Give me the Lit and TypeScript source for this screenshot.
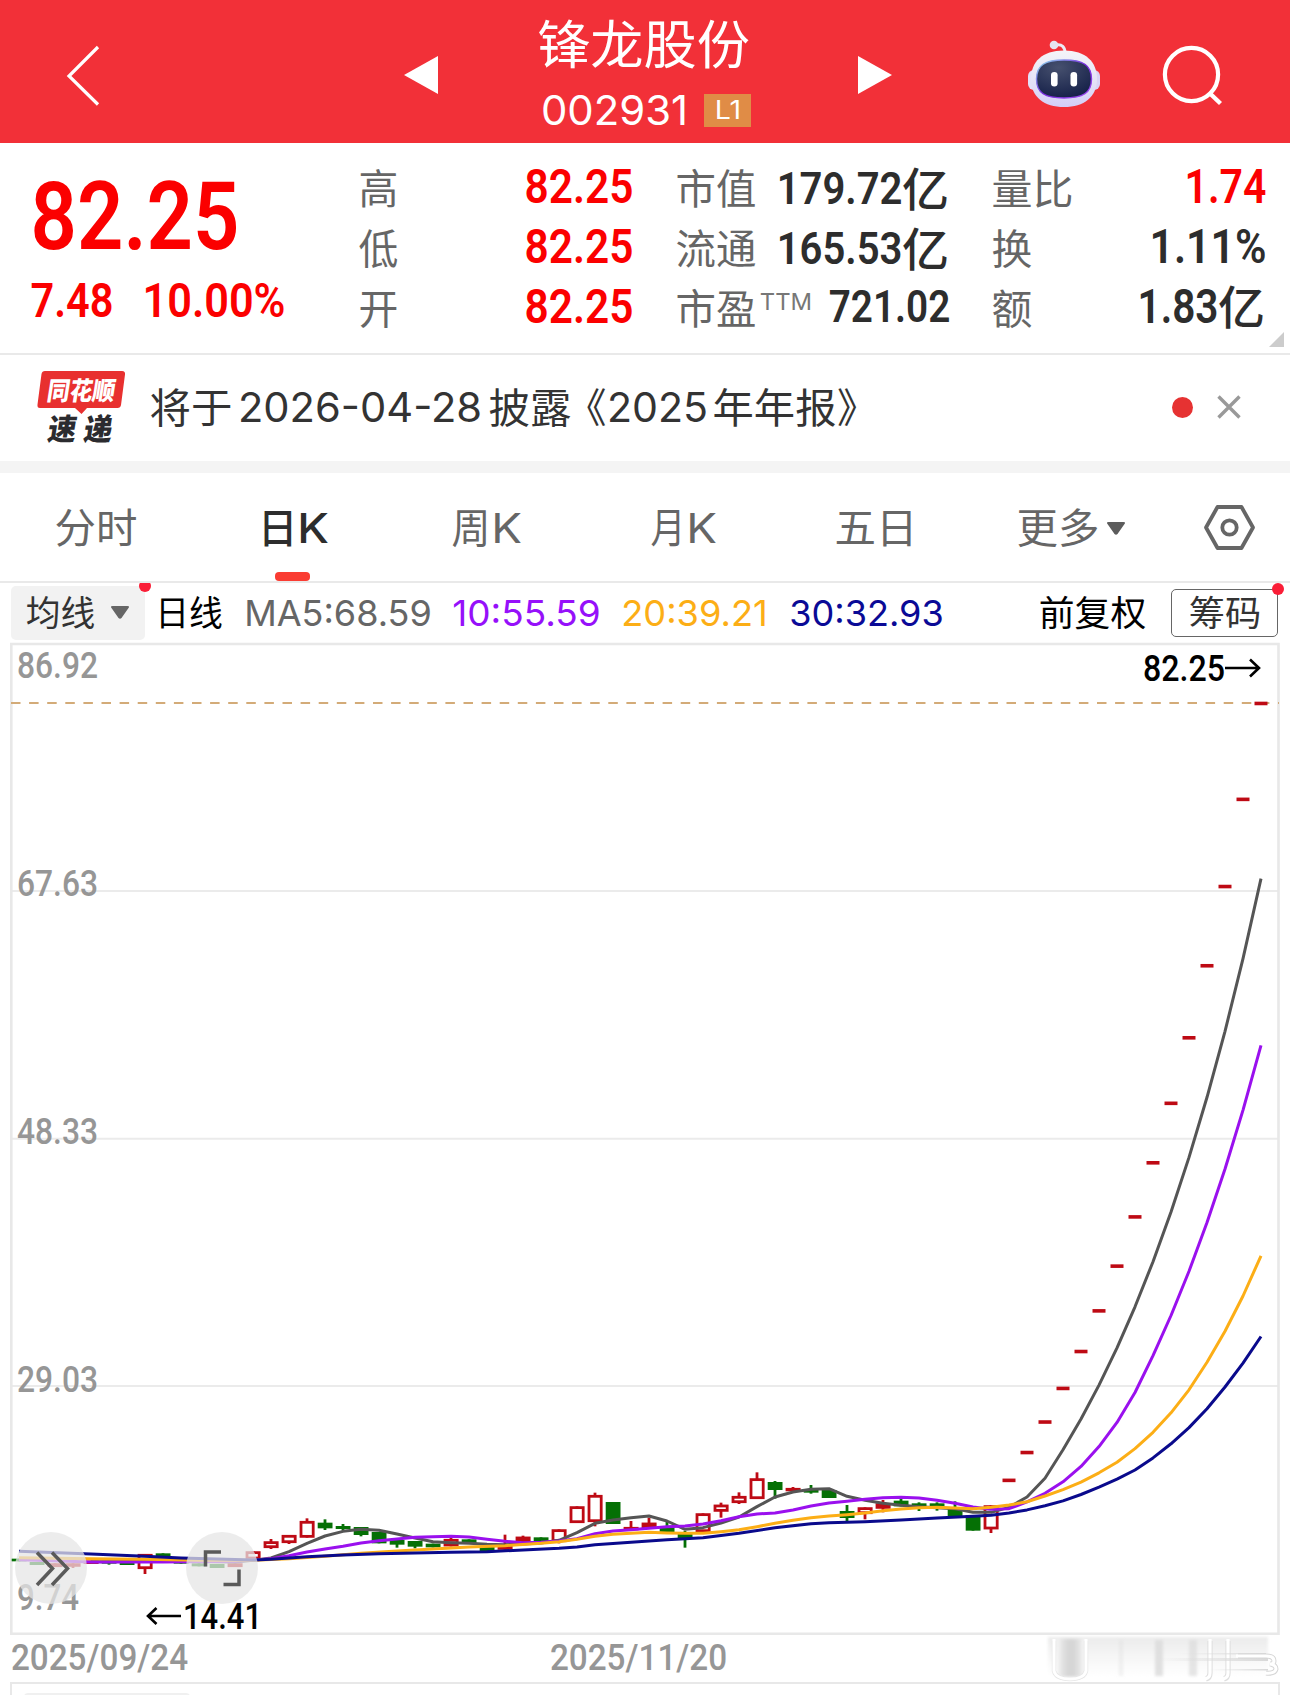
import { LitElement, html, svg, css } from "lit";
import { customElement, property } from "lit/decorators.js";

type Face = "din" | "ui" | "cjk";

/* A run of text set to an exact width. The box is as high as the capitals, so
   rows of mixed scripts line up with align-items: center. */
@customElement("fit-text")
class FitText extends LitElement {
  @property() text = "";
  @property() face: Face = "cjk";
  @property({ type: Number }) width = 40;
  @property({ type: Number }) size = 40;
  @property({ type: Number }) bear = -1;

  static styles = css`
    :host { display: block; flex: none; }
    svg { display: block; overflow: visible; }
    text { fill: currentColor; white-space: pre; }
    .din { font-family: Roboto, "Noto Sans CJK SC", sans-serif; }
    .ui { font-family: Inter, "Noto Sans CJK SC", sans-serif; }
    .cjk { font-family: "Noto Sans CJK SC", sans-serif; }
  `;

  render() {
    const ratio = { din: 0.711, ui: 0.727, cjk: 0.76 }[this.face];
    const side = { din: 0.03, ui: 0.05, cjk: 0.035 }[this.face];
    const b = this.size * (this.bear >= 0 ? this.bear : side);
    const h = this.size * ratio;
    return html`<svg width=${this.width} height=${h}>
      <text class=${this.face} x=${-b} y=${h} font-size=${this.size}
        textLength=${this.width + 2 * b} lengthAdjust="spacingAndGlyphs">${this.text}</text>
    </svg>`;
  }
}

const fit = (text: string, width: number, size: number, face: Face = "cjk", cls = "", bear = -1) =>
  html`<fit-text class=${cls} .text=${text} .width=${width} .size=${size} .face=${face} .bear=${bear}></fit-text>`;

/* Candles: kind, body top, body bottom, high, low, in thirds of a pixel below Y0. */
const Y0 = 1440;
type Candle = [string, number, number, number, number];
const candles: Candle[] = [
  ["g", 356, 364, 356, 364], ["g", 366, 375, 366, 375], ["r", 370, 381, 370, 381], ["r", 370, 380, 370, 384],
  ["r", 362, 370, 362, 370], ["g", 362, 371, 362, 374], ["g", 364, 375, 364, 375], ["r", 342, 387, 342, 402],
  ["g", 340, 349, 340, 349], ["g", 362, 371, 362, 371], ["g", 370, 379, 370, 379], ["g", 372, 384, 372, 384],
  ["r", 370, 381, 370, 381], ["r", 334, 358, 334, 358], ["r", 304, 324, 297, 327], ["r", 285, 309, 285, 312],
  ["r", 243, 293, 235, 293], ["g", 248, 265, 238, 270], ["g", 258, 267, 252, 272], ["g", 261, 285, 261, 289],
  ["g", 276, 310, 276, 310], ["g", 300, 314, 300, 323], ["g", 303, 320, 303, 325], ["g", 311, 322, 311, 322],
  ["r", 297, 319, 293, 319], ["g", 298, 309, 298, 309], ["g", 318, 334, 318, 334], ["r", 317, 329, 284, 329],
  ["r", 290, 306, 287, 306], ["g", 292, 304, 292, 304], ["r", 268, 306, 268, 310], ["r", 199, 249, 199, 249],
  ["r", 165, 246, 158, 259], ["g", 186, 252, 186, 252], ["r", 261, 270, 243, 270], ["r", 248, 264, 233, 264],
  ["g", 262, 280, 245, 280], ["g", 280, 296, 273, 323], ["r", 220, 276, 220, 276], ["r", 194, 215, 188, 233],
  ["r", 168, 189, 157, 192], ["r", 115, 177, 97, 177], ["g", 126, 150, 123, 176], ["r", 144, 153, 141, 153],
  ["g", 147, 158, 135, 161], ["g", 150, 174, 150, 174], ["g", 213, 234, 195, 245], ["r", 202, 222, 202, 238],
  ["r", 190, 206, 180, 217], ["g", 182, 199, 177, 199], ["g", 190, 205, 187, 213], ["g", 190, 205, 187, 212],
  ["g", 205, 228, 184, 228], ["g", 226, 272, 226, 272], ["r", 196, 268, 196, 279],
];
const limitUps = [21.65, 23.82, 26.2, 28.82, 31.7, 34.87, 38.36, 42.2, 46.42, 51.06, 56.17, 61.79, 67.97, 74.77, 82.25];
const priceY = (p: number) => 643.6 + (86.92 - p) * 12.82;
const third = (v: number) => Y0 + v / 3;
const colX = (i: number) => 19 + 18 * i;
const closes = [
  ...candles.map(([k, t, b]) => third(k === "r" ? t : b)),
  ...limitUps.map(priceY),
];

/* Averages for the older candles are stored as [index, level]; recent ones are computed. */
type Pts = [number, number][];
const averages: { n: number; color: string; pts: Pts }[] = [
  { n: 5, color: "#555", pts: [[4, 365], [8, 364], [12, 366], [13, 361], [14, 354], [15, 335], [16, 310], [17, 288], [18, 274], [19, 268], [20, 271], [21, 282], [22, 294], [23, 305], [24, 308], [25, 310], [26, 313], [27, 314], [28, 312], [29, 309], [30, 301], [31, 278], [32, 250], [33, 240], [34, 233], [35, 228], [36, 243], [37, 268], [38, 263], [39, 249], [40, 231], [41, 200], [42, 171], [43, 156], [44, 148], [45, 146], [46, 169], [47, 181], [48, 190], [49, 196], [50, 200], [51, 203], [52, 206], [53, 217], [54, 217], [55, 202]] },
  { n: 10, color: "#9a10ee", pts: [[0, 359], [4, 366], [8, 366], [12, 364], [13, 360], [14, 356], [15, 347], [16, 336], [17, 327], [18, 319], [19, 309], [20, 302], [21, 297], [22, 292], [23, 290], [24, 289], [25, 291], [26, 298], [27, 304], [28, 308], [29, 307], [30, 303], [31, 296], [32, 281], [33, 273], [34, 269], [35, 265], [36, 260], [37, 258], [38, 252], [39, 242], [40, 230], [41, 222], [42, 219], [43, 210], [44, 198], [45, 189], [46, 184], [47, 178], [48, 173], [49, 172], [50, 174], [51, 181], [52, 190], [53, 201], [54, 208], [55, 206]] },
  { n: 20, color: "#fcae16", pts: [[0, 353], [4, 356], [7, 358], [10, 361], [13, 361], [15, 356], [17, 349], [19, 340], [21, 333], [23, 327], [25, 321], [27, 317], [29, 310], [30, 305], [31, 298], [32, 289], [33, 283], [34, 280], [35, 277], [36, 279], [37, 280], [38, 280], [39, 275], [40, 269], [41, 260], [42, 250], [43, 241], [44, 233], [45, 228], [46, 224], [47, 219], [48, 212], [49, 207], [50, 203], [51, 202], [52, 204], [53, 206], [54, 202], [55, 195]] },
  { n: 30, color: "#0a0a8c", pts: [[0, 334], [4, 342], [7, 349], [9, 354], [13, 360], [14, 358], [16, 350], [18, 345], [20, 341], [22, 339], [24, 337], [26, 335], [28, 330], [30, 325], [31, 321], [32, 314], [34, 307], [36, 299], [38, 293], [40, 280], [42, 263], [44, 251], [45, 248], [46, 247], [47, 245], [49, 240], [51, 234], [53, 229], [54, 226], [55, 219]] },
];

@customElement("k-chart")
class KChart extends LitElement {
  static styles = css`
    :host { display: block; }
    svg { display: block; overflow: visible; }
    text { font-family: Roboto, sans-serif; font-weight: 500; }
    .scale { fill: #969696; font-size: 36.5px; font-weight: 550; }
    .mark { fill: #000; font-size: 36px; }
    .frame { fill: none; stroke: #e8e8e8; stroke-width: 2.6; }
    .grid { stroke: #ebebeb; stroke-width: 2; }
    .last { stroke: #d3ab78; stroke-width: 1.8; stroke-dasharray: 9.5 8.6; }
    .r { fill: #fff; stroke: #be0a14; stroke-width: 2.8; }
    .wr { stroke: #be0a14; stroke-width: 2.8; }
    .g { fill: #057005; }
    .wg { stroke: #057005; stroke-width: 2.8; }
    .flat { stroke: #be0a14; stroke-width: 3.6; }
    .avg { fill: none; stroke-width: 3; stroke-linejoin: round; }
    .disc { fill: #e6e6e6; fill-opacity: 0.74; }
    .icon { fill: none; stroke: #5a5a5a; stroke-width: 3.5; }
    .arrow { fill: none; stroke: #000; stroke-width: 2.6; }
  `;

  private candle([k, t, b, hi, lo]: Candle, i: number) {
    const x = colX(i), top = third(t), bot = third(b);
    return svg`
      <line class="w${k}" x1=${x} x2=${x} y1=${third(hi)} y2=${third(lo)} />
      ${k === "r"
        ? svg`<rect class="r" x=${x - 6} y=${top + 1.3} width="12.2" height=${Math.max(0.6, bot - top - 2.6)} />`
        : svg`<rect class="g" x=${x - 7.3} y=${top} width="14.8" height=${bot - top} />`}`;
  }

  private average({ n, color, pts }: { n: number; color: string; pts: Pts }) {
    const p = pts.map(([i, v]) => `${colX(i)},${third(v)}`);
    for (let i = 56; i < closes.length; i++) {
      const mean = closes.slice(i - n + 1, i + 1).reduce((a, c) => a + c, 0) / n;
      p.push(`${colX(i)},${mean.toFixed(1)}`);
    }
    return svg`<polyline class="avg" stroke=${color} points=${p.join(" ")} />`;
  }

  render() {
    return html`<svg width="1290" height="993" viewBox="0 643 1290 993">
      ${[891, 1138.7, 1386].map((y) => svg`<line class="grid" x1="12" x2="1278" y1=${y} y2=${y} />`)}
      <path class="frame" d="M11.3 644H1278.5V1633.7H11.3Z" />
      ${([[86.92, 678], [67.63, 896], [48.33, 1143.5], [29.03, 1392]] as const).map(([v, y]) =>
        svg`<text class="scale" x="17" y=${y} textLength="81" lengthAdjust="spacingAndGlyphs">${v}</text>`)}
      <text class="scale" x="17" y="1609.5" textLength="62" lengthAdjust="spacingAndGlyphs">9.74</text>
      ${candles.map((c, i) => this.candle(c, i))}
      <line class="last" x1="11" x2="1279" y1="703" y2="703" />
      ${limitUps.map((p, i) => svg`<line class="flat" x1=${colX(55 + i) - 6.5} x2=${colX(55 + i) + 6.5} y1=${priceY(p)} y2=${priceY(p)} />`)}
      ${averages.map((a) => this.average(a))}
      <text class="mark" x="1143" y="681" textLength="82" lengthAdjust="spacingAndGlyphs">82.25</text>
      <path class="arrow" d="M1225 668H1259M1250 659.500L1259 668L1250 676.500" />
      <text class="mark" x="183" y="1629" textLength="79" lengthAdjust="spacingAndGlyphs">14.41</text>
      <path class="arrow" d="M181 1616H148M156.500 1608L148 1616L156.500 1624" />
      <circle class="disc" cx="51" cy="1568" r="36" />
      <path class="icon" d="M37 1552.500L52.500 1568.500L37 1585M52 1552.500L67.500 1568.500L52 1585" />
      <circle class="disc" cx="222" cy="1568" r="36" />
      <path class="icon" d="M205.500 1566.500V1552H221M239 1569.500V1584.500H223.500" />
    </svg>`;
  }
}

@customElement("app-root")
class AppRoot extends LitElement {
  static styles = css`
    :host { display: block; width: 1290px; height: 1695px; overflow: hidden; background: #fff; color: #333; }
    * { box-sizing: border-box; }
    svg { display: block; flex: none; overflow: visible; }
    .head { height: 143px; background: #f23038; color: #fff; display: flex; padding: 0 66px; }
    .back { margin: 46px 305px 0 0; }
    .prev { margin: 56px 101px 0 0; }
    .title { width: 212px; padding-top: 24px; }
    .code { display: flex; gap: 18px; margin: 30px 0 0 4px; }
    .code fit-text { margin-top: 1px; }
    .badge { width: 48px; height: 33px; background: #e08c46; display: flex; align-items: center; justify-content: center; }
    .badge fit-text { margin: 0; }
    .next { margin: 56px 0 0 107px; }
    .bot { margin: 40px 0 0 135px; }
    .find { margin: 45px 0 0 61px; }

    .stats { height: 212px; border-bottom: 2px solid #e9e9e9; display: grid; grid-template-columns: 328px 317px 316px 273px; padding: 15px 24px 0 32px; position: relative; }
    .red { color: #fb0000; }
    .num { font-weight: 600; }
    .delta { display: flex; gap: 32px; margin-top: 34.5px; }
    .main { padding-top: 23px; }
    .line { width: 272px; height: 60px; display: flex; align-items: center; color: #666; }
    .line .dark { color: #2d2d2d; font-weight: 600; }
    .line .yi { font-weight: 500; }
    .line .end { margin-left: auto; }
    .line .raise { margin-bottom: 4px; }
    .line .ttm { margin: 0 0 13px 6px; color: #777; }
    .pair { display: flex; align-items: center; gap: 1px; }
    .fold { position: absolute; right: 6px; bottom: 6px; }

    .news { height: 106px; display: flex; align-items: center; padding: 0 49px 2px 37px; }
    .copy { display: flex; align-items: center; margin-left: 26px; }
    .dot { width: 21px; height: 21px; border-radius: 50%; background: #e63232; margin: 0 24px 0 auto; }
    .band { height: 12px; background: #f4f4f4; }

    .tabs { height: 110px; border-bottom: 2px solid #e9e9e9; display: flex; color: #666; }
    .tab { width: 195px; padding-top: 2px; display: flex; align-items: center; justify-content: center; gap: 5px; position: relative; }
    .shift { padding-right: 3px; }
    .on { color: #2d2d2d; font-weight: 500; padding-left: 4px; gap: 8px; }
    .on::after { content: ""; position: absolute; left: 80px; bottom: 0; width: 35px; height: 9px; border-radius: 4px; background: #fa3c32; }
    .caret { margin-left: 4px; }
    .gear { flex: 1; display: flex; align-items: center; justify-content: center; padding-right: 1px; }

    .legend { height: 60px; display: flex; align-items: center; padding: 0 12px 1px 11px; color: #000; overflow: hidden; }
    .pick { width: 134px; height: 54px; border-radius: 5px; background: #f2f2f2; display: flex; align-items: center; padding: 0 16px; justify-content: space-between; color: #333; margin: 0 13px 0 0; position: relative; }
    .pick::after, .chip::after { content: ""; position: absolute; width: 12px; height: 12px; border-radius: 50%; background: #fa1e37; }
    .pick::after { right: -6px; top: -6px; }
    .chip { width: 107px; height: 48px; border: 1.5px solid #666; border-radius: 5px; display: flex; align-items: center; justify-content: center; margin-left: 26px; position: relative; color: #333; }
    .chip::after { right: -7px; top: -7px; }
    .m5, .m10, .m20, .m30 { padding-top: 2px; }
    .m5 { color: #666; margin: 0 24px 0 26px; }
    .m10 { color: #9610fa; margin-right: 24px; }
    .m20 { color: #fcae16; margin-right: 25px; }
    .m30 { color: #0a0a96; margin-right: auto; }

    .dates { height: 46px; padding: 7.5px 12px 0; display: flex; color: #969696; font-weight: 550; position: relative; }
    .second { margin-left: 364px; }
    .ghost { position: absolute; left: 1048px; top: -1px; }
    .panel { height: 13px; margin: 0 10px; border: 2.6px solid #e8e8e8; border-bottom: 0; padding: 9px 12px 0; }
    .stub { height: 4px; width: 166px; border-radius: 5px 5px 0 0; background: #f0f0f0; }
    .brand { font-family: "Noto Sans CJK SC", sans-serif; font-weight: 900; }
    .quote { font-family: "Noto Sans CJK SC", sans-serif; font-size: 40.5px; fill: currentColor; }
  `;

  private stat(label: string, lw: number, value: unknown) {
    return html`<div class="line">${fit(label, lw, 40.5)}${value}</div>`;
  }

  render() {
    const yi = (num: string, w: number, size: number, cls = "") => html`<div class="pair end dark ${cls}">
      ${fit(num, w, size, "din")}${fit("亿", 47, 46, "cjk", "yi", 0)}</div>`;
    return html`
      <header class="head">
        <svg class="back" width="33" height="60"><path d="M32 1L3 30L32 58.500" fill="none" stroke="#fff" stroke-width="3.200" /></svg>
        <svg class="prev" width="34" height="38"><path d="M0 19L34 0V38Z" fill="#fff" /></svg>
        <div class="title">
          ${fit("锋龙股份", 209, 52.5)}
          <div class="code">${fit("002931", 143, 41.5, "ui")}<span class="badge">${fit("L1", 24, 25, "ui")}</span></div>
        </div>
        <svg class="next" width="34" height="38"><path d="M34 19L0 0V38Z" fill="#fff" /></svg>
        <svg class="bot" width="74" height="68" viewBox="1028 40 74 68">
          <defs>
            <linearGradient id="shell" x1="0" y1="0" x2="0" y2="1"><stop offset="0" stop-color="#f5f4f8" /><stop offset=".6" stop-color="#e3e0f6" /><stop offset="1" stop-color="#d3cdf8" /></linearGradient>
            <linearGradient id="rim" x1="0" y1="0" x2="1" y2="1"><stop offset="0" stop-color="#8fe3ec" /><stop offset=".5" stop-color="#7a2be0" /><stop offset="1" stop-color="#a04df0" /></linearGradient>
            <radialGradient id="glass" cx=".4" cy=".2" r=".8"><stop offset="0" stop-color="#46506e" /><stop offset="1" stop-color="#17224a" /></radialGradient>
          </defs>
          <path d="M1057 45C1063 44 1066 47 1066 53" fill="none" stroke="#eceaf4" stroke-width="3" />
          <circle cx="1055" cy="45" r="4.300" fill="#e6e4f0" />
          <rect x="1029" y="70" width="12" height="20" rx="6" fill="#e4e0f8" />
          <rect x="1089" y="70" width="12" height="20" rx="6" fill="#d9d4f6" />
          <path d="M1065 50.500C1087 50.500 1098 62 1098 79C1098 97 1085 107 1065 107C1045 107 1032 97 1032 79C1032 62 1043 50.500 1065 50.500Z" fill="url(#shell)" />
          <path d="M1065 60C1084 60 1092.500 65 1092.500 79C1092.500 93 1084 98 1065 98C1046 98 1037.500 93 1037.500 79C1037.500 65 1046 60 1065 60Z" fill="url(#glass)" stroke="url(#rim)" stroke-width="1.400" />
          <rect x="1052" y="72" width="6.600" height="14.500" rx="3.300" fill="#fff" />
          <rect x="1071.500" y="72" width="6.600" height="14.500" rx="3.300" fill="#fff" />
        </svg>
        <svg class="find" width="60" height="60"><circle cx="29.500" cy="29.500" r="26.600" fill="none" stroke="#fff" stroke-width="4.200" /><path d="M48 48.500L58.500 58.500" stroke="#fff" stroke-width="4.400" /></svg>
      </header>

      <section class="stats">
        <div class="main red num">
          ${fit("82.25", 206, 95, "din", "", 0.015)}
          <div class="delta">${fit("7.48", 80, 48, "din")}${fit("10.00%", 140, 48, "din")}</div>
        </div>
        <div>
          ${["高", "低", "开"].map((l) => this.stat(l, 37, fit("82.25", 106, 48, "din", "end raise red num")))}
        </div>
        <div>
          ${this.stat("市值", 78, yi("179.72", 123, 45))}
          ${this.stat("流通", 78, yi("165.53", 123, 45))}
          ${this.stat("市盈", 78, html`${fit("TTM", 50, 23.5, "ui", "ttm")}${fit("721.02", 119, 43.5, "din", "end raise dark")}`)}
        </div>
        <div>
          ${this.stat("量比", 79, fit("1.74", 79, 48, "din", "end raise red num"))}
          ${this.stat("换", 38, fit("1.11%", 114, 48, "din", "end raise dark"))}
          ${this.stat("额", 38, yi("1.83", 78, 48, "raise"))}
        </div>
        <svg class="fold" width="15" height="15"><path d="M15 0V15H0Z" fill="#ccc" /></svg>
      </section>

      <section class="news">
        <svg width="88" height="74" viewBox="37 370 88 74">
          <path d="M45 371H122Q125.500 371 125 374.500L121 405Q120.500 408 117.500 408H87L81.500 414L75 408H40Q37 408 37.500 404.500L41.500 374Q42 371 45 371Z" fill="#e8302f" />
          <g class="brand">
            <text transform="translate(46 400) skewX(-9)" font-size="25.500" fill="#fff" textLength="68" lengthAdjust="spacingAndGlyphs">同花顺</text>
            <text transform="translate(46.500 439.500) skewX(-9) scale(.95 1)" font-size="30" fill="#2b2b2f" textLength="68" lengthAdjust="spacing">速递</text>
          </g>
        </svg>
        <div class="copy">
          ${fit("将于", 80, 40.5)}
          <svg width="9" height="1"></svg>${fit("2026-04-28", 240, 41, "ui")}
          <svg width="10" height="1"></svg>${fit("披露", 80, 40.5)}
          <svg width="17" height="1"></svg>
          <svg width="20" height="31"><text class="quote" x="-21" y="31">《</text></svg>
          <svg width="2" height="1"></svg>${fit("2025", 97, 41, "ui")}
          <svg width="8" height="1"></svg>${fit("年年报", 121, 40.5)}
          <svg width="20" height="31"><text class="quote" x="2" y="31">》</text></svg>
        </div>
        <span class="dot"></span>
        <svg width="24" height="24"><path d="M1.500 1.500L22.500 22.500M22.500 1.500L1.500 22.500" stroke="#999" stroke-width="3.400" /></svg>
      </section>
      <div class="band"></div>

      <nav class="tabs">
        <div class="tab shift">${fit("分时", 80, 41)}</div>
        <div class="tab on">${fit("日", 29.5, 41, "cjk", "", 0.12)}${fit("K", 26, 41, "ui", "", 0.07)}</div>
        <div class="tab shift">${fit("周", 36, 41)}${fit("K", 25, 41, "ui", "", 0.07)}</div>
        <div class="tab">${fit("月", 32, 41)}${fit("K", 25, 41, "ui", "", 0.07)}</div>
        <div class="tab shift">${fit("五日", 80, 41)}</div>
        <div class="tab shift">${fit("更多", 80, 41)}<svg class="caret" width="18" height="13"><path d="M1.500 0H16.500Q19 0 17.500 2L10.500 12Q9 13.500 7.500 12L.5 2Q-1 0 1.500 0Z" fill="#5c5c5c" /></svg></div>
        <div class="gear"><svg width="51" height="45"><path d="M13.500 2H37.500L49 22.500L37.500 43H13.500L2 22.500Z" fill="none" stroke="#666" stroke-width="3.800" stroke-linejoin="round" /><circle cx="25.500" cy="22.500" r="7.200" fill="none" stroke="#666" stroke-width="3.800" /></svg></div>
      </nav>

      <div class="legend">
        <div class="pick">${fit("均线", 67, 35)}<svg width="18" height="13"><path d="M1.500 0H16.500Q19 0 17.500 2L10.500 12Q9 13.500 7.500 12L.5 2Q-1 0 1.500 0Z" fill="#666" /></svg></div>
        ${fit("日线", 62, 35, "cjk", "", 0.08)}
        ${fit("MA5:68.59", 184, 36, "ui", "m5")}
        ${fit("10:55.59", 145, 36, "ui", "m10")}
        ${fit("20:39.21", 143, 36, "ui", "m20")}
        ${fit("30:32.93", 151, 36, "ui", "m30")}
        ${fit("前复权", 105, 35)}
        <div class="chip">${fit("筹码", 70, 35)}</div>
      </div>

      <k-chart></k-chart>

      <div class="dates">
        ${fit("2025/09/24", 175, 36.5, "din")}
        ${fit("2025/11/20", 175, 36.5, "din", "second")}
        <svg class="ghost" width="232" height="46">
          <defs>
            <linearGradient id="fade" x1="0" y1="0" x2="0" y2="1"><stop offset="0" stop-color="#ebebeb" /><stop offset=".6" stop-color="#f8f8f8" /><stop offset="1" stop-color="#fff" /></linearGradient>
            <linearGradient id="tube" x1="0" y1="0" x2="1" y2="0"><stop offset="0" stop-color="#f6f6f6" /><stop offset=".2" stop-color="#e2e2e2" /><stop offset=".4" stop-color="#d6d6d6" /><stop offset=".6" stop-color="#d6d6d6" /><stop offset=".8" stop-color="#e4e4e4" /><stop offset="1" stop-color="#fafafa" /></linearGradient>
            <linearGradient id="streak" x1="0" y1="0" x2="1" y2="0"><stop offset="0" stop-color="#dcdcdc" stop-opacity="0" /><stop offset="1" stop-color="#d8d8d8" /></linearGradient>
            <filter id="soft"><feGaussianBlur stdDeviation="1.800" /></filter>
          </defs>
          <rect x="0" y="2" width="220" height="40" fill="url(#fade)" filter="url(#soft)" />
          <g fill="#dcdcdc" filter="url(#soft)"><rect x="71" y="5" width="4" height="36" opacity=".4" /><rect x="107" y="5" width="8" height="36" opacity=".85" /><rect x="141" y="5" width="8" height="36" opacity=".7" /></g>
          <rect x="9" y="4" width="28" height="38" fill="url(#tube)" filter="url(#soft)" />
          <g fill="none">
            <path d="M6 6V36Q8 44 22 44Q36 44 38 36V6" stroke="#e6e6e6" stroke-width="4.400" />
            <path d="M6 4V36Q8 44 22 44Q36 44 38 36V4" stroke="#fff" stroke-width="3" />
            <path d="M162 6V38Q162 43 158 44M180 6V38Q180 43 176 44" stroke="#dedede" stroke-width="5.200" />
            <path d="M162 4V38Q162 43 157 44M180 4V38Q180 43 175 44" stroke="#fff" stroke-width="3.200" />
          </g>
          <g fill="url(#streak)"><rect x="130" y="18" width="88" height="1.500" /><rect x="110" y="23" width="110" height="3" /><rect x="160" y="34" width="60" height="1.500" /></g>
          <g fill="none">
            <path d="M190 21H218Q226 21 226 26Q226 29 222 29Q228 30 228 34Q227 39 218 38" stroke="#d6d6d6" stroke-width="5" />
            <path d="M188 21H218Q226 21 226 26Q226 29 222 29Q228 30 228 34Q227 39 217 38" stroke="#fff" stroke-width="3" />
          </g>
        </svg>
      </div>
      <div class="panel"><div class="stub"></div></div>
    `;
  }
}
